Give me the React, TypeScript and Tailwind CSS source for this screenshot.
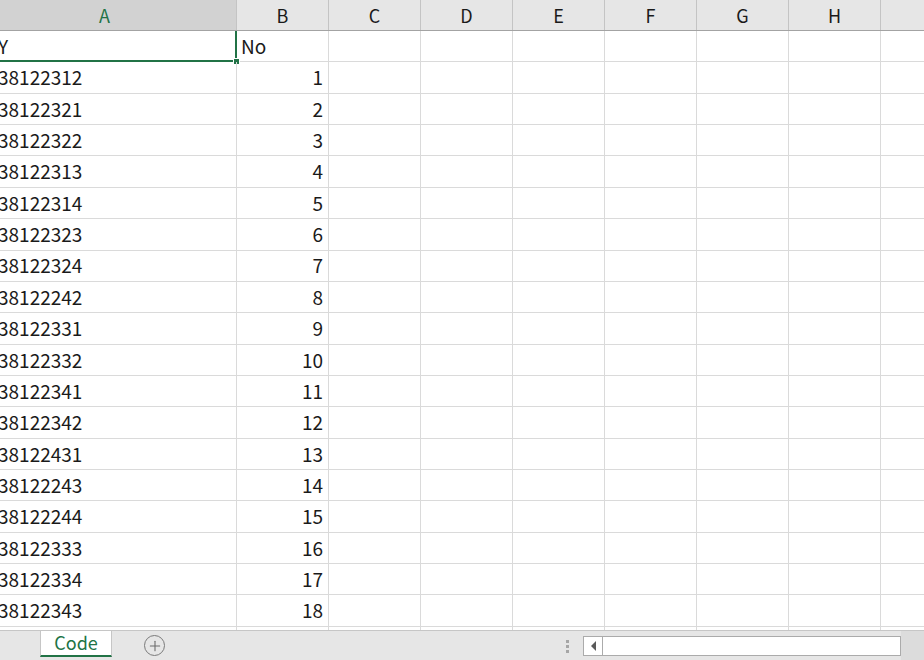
import { Plus } from "lucide-react";

const codes = [
  "38122312", "38122321", "38122322", "38122313", "38122314", "38122323",
  "38122324", "38122242", "38122331", "38122332", "38122341", "38122342",
  "38122431", "38122243", "38122244", "38122333", "38122334", "38122343",
];

const cols = ["C", "D", "E", "F", "G", "H"];

function Row({ a, b, first }: { a: string; b: string; first?: boolean }) {
  return (
    <div className="grid grid-cols-[237px_repeat(7,92px)_1fr] h-[31.37px] shrink-0">
      <div className="relative border-r border-b border-[#dadada] flex items-center overflow-visible">
        <span className="block overflow-hidden whitespace-nowrap -indent-[2px] w-full">{a}</span>
        {first && (
          <div className="absolute left-[-3px] top-[-2px] right-[-1px] bottom-[-1px] border-2 border-[#217346]">
            <div className="absolute right-[-5px] bottom-[-5px] w-[7px] h-[7px] bg-[#217346] border border-white" />
          </div>
        )}
      </div>
      <div className={"border-r border-b border-[#dadada] flex items-center " + (first ? "justify-start pl-[4px]" : "justify-end pr-[5px]")}>
        {b}
      </div>
      {cols.map((c) => (
        <div key={c} className="border-r border-b border-[#dadada]" />
      ))}
      <div className="border-b border-[#dadada]" />
    </div>
  );
}

export default function App() {
  return (
    <div className="w-[924px] h-[660px] overflow-hidden bg-white flex flex-col text-[19px] text-[#1a1a1a] font-['Noto_Sans_CJK_JP','Liberation_Sans',sans-serif]">
      {/* column headers */}
      <div className="grid grid-cols-[237px_repeat(7,92px)_1fr] h-[31px] shrink-0 bg-[#e6e6e6] border-b border-[#a3a3a3] text-[18px] leading-none">
        <div className="bg-[#d2d2d2] text-[#217346] border-r border-[#c4c4c4] flex items-center justify-start pl-[99px]">A</div>
        <div className="border-r border-[#c4c4c4] flex items-center justify-center">B</div>
        {cols.map((c) => (
          <div key={c} className="border-r border-[#c4c4c4] flex items-center justify-center">{c}</div>
        ))}
        <div />
      </div>

      {/* sheet body */}
      <div className="flex-1 overflow-hidden flex flex-col">
        <Row a="Y" b="No" first />
        {codes.map((c, i) => (
          <Row key={c} a={c} b={String(i + 1)} />
        ))}
        <Row a="" b="" />
      </div>

      {/* sheet tabs */}
      <div className="h-[30px] shrink-0 bg-[#e6e6e6] border-t border-[#c6c6c6] flex items-start relative">
        <div className="ml-[40px] w-[72px] h-[26px] bg-white border-x border-[#c6c6c6] border-b-2 border-b-[#217346] flex items-center justify-center pb-[2px] text-[#217346] text-[18px] leading-none">
          Code
        </div>
        <div className="ml-[32px] mt-[4px] w-[21px] h-[21px] rounded-full border border-[#7a7a7a] flex items-center justify-center text-[#6a6a6a]">
          <Plus size={16} strokeWidth={1.6} />
        </div>
        <div className="ml-auto mt-[9px] mr-[14px] flex flex-col gap-[2px]">
          <div className="w-[3px] h-[3px] bg-[#a6a6a6]" />
          <div className="w-[3px] h-[3px] bg-[#a6a6a6]" />
          <div className="w-[3px] h-[3px] bg-[#a6a6a6]" />
        </div>
        <div className="mt-[5px] w-[318px] h-[20px] bg-white border border-[#ababab] flex">
          <div className="w-[19px] border-r border-[#ababab] flex items-center justify-center">
            <div className="w-0 h-0 border-y-[5px] border-y-transparent border-r-[5px] border-r-[#5a5a5a]" />
          </div>
        </div>
        <div className="w-[23px] self-stretch bg-[#dcdcdc]" />
      </div>
    </div>
  );
}
